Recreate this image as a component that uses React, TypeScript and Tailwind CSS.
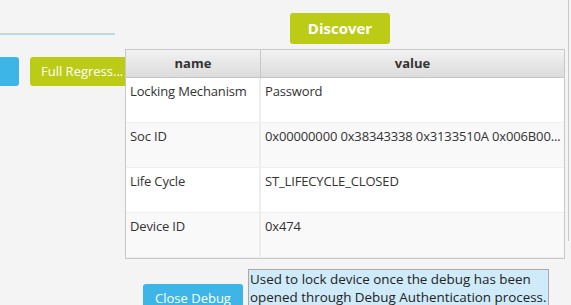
const rows = [
  { name: 'Locking Mechanism', value: 'Password' },
  { name: 'Soc ID', value: '0x00000000 0x38343338 0x3133510A 0x006B00...' },
  { name: 'Life Cycle', value: 'ST_LIFECYCLE_CLOSED' },
  { name: 'Device ID', value: '0x474' },
]

function DeviceTable() {
  return (
    <div className="absolute left-[125px] top-[49px] flex h-[210px] w-[440px] flex-col border border-[#c8c8c8] bg-[#f9f9f9]">
      <div className="flex h-[28px] shrink-0 border-b border-[#c4c4c4] bg-gradient-to-b from-[#f2f2f2] to-[#dcdcdc] text-[13px] font-bold text-[#333]">
        <div className="flex w-[135px] items-center justify-center border-r border-[#c8c8c8]">name</div>
        <div className="flex flex-1 items-center justify-center">value</div>
      </div>
      {rows.map((r, i) => (
        <div
          key={r.name}
          className={`flex h-[45px] shrink-0 border-b border-[#efefef] text-[13px] tracking-[-0.15px] text-[#333] ${i % 2 === 0 ? 'bg-white' : 'bg-[#f9f9f9]'}`}
        >
          <div className="w-[135px] border-r-2 border-[#ececec] pl-[4px] pt-[4px]">{r.name}</div>
          <div className="flex-1 overflow-hidden whitespace-nowrap pl-[4px] pr-[4px] pt-[4px]">{r.value}</div>
        </div>
      ))}
    </div>
  )
}

export default function App() {
  return (
    <div
      className="relative h-[305px] w-[571px] overflow-hidden bg-[#f4f4f4]"
      style={{ fontFamily: '"Open Sans", "Noto Sans", sans-serif' }}
    >
      <div className="flex pt-[13px]">
        <div className="w-[115px] pt-[20px]">
          <div className="h-px bg-[#d4d4d4]" />
          <div className="h-px bg-[#a9dcee]" />
        </div>
        <button className="ml-[175px] h-[31px] w-[100px] rounded-[3px] bg-[#bccc16] text-[15px] font-bold text-white">
          Discover
        </button>
      </div>
      <div className="mt-[13px] flex gap-[11px]">
        <button className="-ml-[10px] h-[29px] w-[29px] rounded-[3px] bg-[#3db5e6]" />
        <button className="h-[29px] w-[110px] rounded-[3px] bg-[#bccc16] pl-[11px] text-left text-[13px] text-white">
          Full Regress...
        </button>
      </div>
      <div className="mt-[198px] pl-[143px]">
        <button className="h-[29px] w-[100px] rounded-[3px] bg-[#3db5e6] text-[13px] text-white">Close Debug</button>
      </div>

      <DeviceTable />

      <div className="absolute right-[2px] top-0 h-[241px] w-px rounded-b bg-[#c8c8c8]" />

      <div className="absolute left-[248px] top-[269px] w-[301px] whitespace-nowrap border border-[#a9a9a9] bg-[#cfeaf8] px-[1px] text-[13.4px] leading-[18px] text-[#222]">
        Used to lock device once the debug has been
        <br />
        opened through Debug Authentication process.
      </div>
    </div>
  )
}
